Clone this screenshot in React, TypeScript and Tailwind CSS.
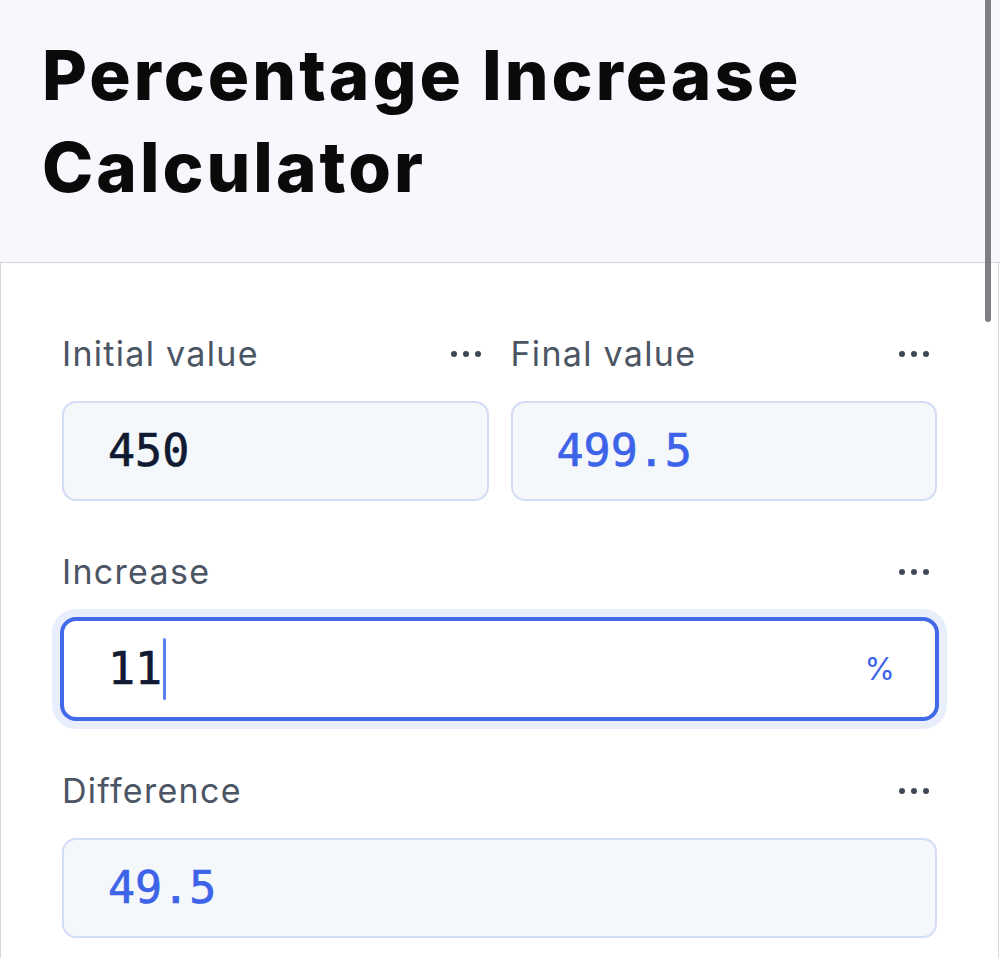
import React from "react";

const Dots = () => (
  <div className="flex items-center gap-[6px]">
    <span className="block h-[6px] w-[6px] rounded-full bg-[#404754]" />
    <span className="block h-[6px] w-[6px] rounded-full bg-[#404754]" />
    <span className="block h-[6px] w-[6px] rounded-full bg-[#404754]" />
  </div>
);

const Label = ({ text }: { text: string }) => (
  <div className="flex h-[48px] items-center justify-between pr-[8px]">
    <span className="-mt-[2px] text-[34px] tracking-[1.3px] text-[#4b5563] font-['Inter',sans-serif]">{text}</span>
    <Dots />
  </div>
);

const Box = ({ value, color }: { value: string; color: string }) => (
  <div className="mt-[23px] flex h-[100px] items-center rounded-[14px] border-2 border-[#d3dcf6] bg-[#f5f8fb] pl-[44px]">
    <span className={`text-[45px] [-webkit-text-stroke:0.7px_currentColor] font-['DejaVu_Sans_Mono',monospace] ${color}`}>{value}</span>
  </div>
);

export default function App() {
  return (
    <div className="relative min-h-[958px] w-[1000px] overflow-hidden bg-white">
      <header className="h-[263px] border-b border-[#d4d6da] bg-[#f6f8fe] pl-[42px] pt-[29px]">
        <h1 className="text-[69px] font-extrabold leading-[92px] tracking-[3px] text-[#0a0a0a] font-['Inter',sans-serif]">
          Percentage Increase
          <br />
          Calculator
        </h1>
      </header>
      <main className="mr-[1px] min-h-[695px] border-x border-[#d4d6da] bg-white px-[61px] pt-[67px]">
        <div className="grid grid-cols-2 gap-x-[22px]">
          <div>
            <Label text="Initial value" />
            <Box value="450" color="text-[#111a33]" />
          </div>
          <div>
            <Label text="Final value" />
            <Box value="499.5" color="text-[#3d63e8]" />
          </div>
        </div>
        <div className="mt-[47px]">
          <Label text="Increase" />
          <div className="mt-[23px] flex h-[100px] items-center rounded-[14px] border-2 border-[#4169e8] bg-white pl-[44px] pr-[40px] shadow-[0_0_0_2px_#4169e8,0_0_0_10px_#e9eefc]">
            <span className="text-[45px] [-webkit-text-stroke:0.7px_currentColor] text-[#111a33] font-['DejaVu_Sans_Mono',monospace]">11</span>
            <span className="ml-[1px] block h-[62px] w-[3px] rounded-full bg-[#5b7ff0]" />
            <span className="ml-auto text-[31px] text-[#3d63e8] font-['Inter',sans-serif]">%</span>
          </div>
        </div>
        <div className="mt-[48px]">
          <Label text="Difference" />
          <Box value="49.5" color="text-[#3d63e8]" />
        </div>
      </main>
      <div className="absolute right-[9px] top-0 h-[322px] w-[6px] rounded-b-full bg-[#7d7f84]" />
    </div>
  );
}
